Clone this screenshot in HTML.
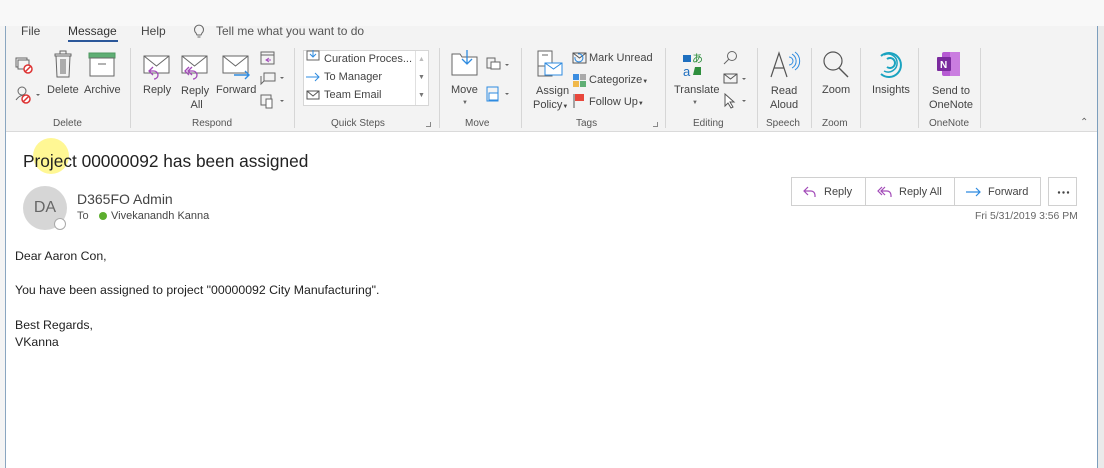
<!DOCTYPE html>
<html><head><meta charset="utf-8"><style>
*{margin:0;padding:0;box-sizing:border-box}
body{width:1104px;height:468px;position:relative;overflow:hidden;background:#fff;font-family:"Segoe UI","Liberation Sans","DejaVu Sans",sans-serif;color:#333}
.a{position:absolute;white-space:nowrap}
.t{font-size:11px;color:#444}
.g{font-size:10px;color:#555}
.sep{position:absolute;top:48px;width:1px;height:80px;background:#d6d6d6}
svg{position:absolute;overflow:visible}
.btn{position:absolute;top:177px;height:29px;border:1px solid #d0d0d0;background:#fff;font-size:11px;color:#444;line-height:27px}
.lb{top:84px}
</style></head><body>
<div class="a" style="left:0;top:0;width:1104px;height:26px;background:#f8f8f8"></div>
<div class="a" style="left:0;top:26px;width:1104px;height:442px;background:#f4f4f4"></div>
<div class="a" style="left:6px;top:26px;width:1091px;height:106px;background:#f3f3f3"></div>
<div class="a" style="left:6px;top:131px;width:1091px;height:1px;background:#dadada"></div>
<div class="a" style="left:6px;top:132px;width:1091px;height:336px;background:#fff"></div>
<div class="a" style="left:5px;top:26px;width:1px;height:442px;background:#8aa6c0"></div>
<div class="a" style="left:1097px;top:26px;width:1px;height:442px;background:#7c9ebd"></div>
<div class="a" style="left:1098px;top:26px;width:6px;height:442px;background:#eaeaea"></div>

<!-- tabs -->
<div class="a" style="left:21px;top:24px;font-size:12px;color:#444">File</div>
<div class="a" style="left:68px;top:24px;font-size:12px;color:#333">Message</div>
<div class="a" style="left:68px;top:40px;width:50px;height:2px;background:#2b579a"></div>
<div class="a" style="left:141px;top:24px;font-size:12px;color:#444">Help</div>
<svg style="left:193px;top:25px" width="12" height="14"><path d="M3 8a4.5 4.5 0 1 1 6 0l-1 2H4z" fill="none" stroke="#666"/><line x1="4.5" y1="12" x2="7.5" y2="12" stroke="#666"/></svg>
<div class="a" style="left:216px;top:24px;font-size:12px;color:#555">Tell me what you want to do</div>

<!-- Delete group -->
<svg style="left:15px;top:57px" width="20" height="18"><rect x="1" y="1" width="11" height="9" fill="none" stroke="#666"/><rect x="3" y="3" width="11" height="9" fill="#f3f3f3" stroke="#666"/><circle cx="13" cy="12" r="4" fill="#fff" stroke="#d33" stroke-width="1.5"/><line x1="10" y1="15" x2="16" y2="9" stroke="#d33" stroke-width="1.5"/></svg>
<svg style="left:15px;top:86px" width="26" height="18"><circle cx="7" cy="5" r="4" fill="none" stroke="#666"/><path d="M1 14 Q7 6 12 12" fill="none" stroke="#666"/><circle cx="11" cy="13" r="4" fill="#fff" stroke="#d33" stroke-width="1.5"/><line x1="8" y1="16" x2="14" y2="10" stroke="#d33" stroke-width="1.5"/><path d="M21 8l2 2 2-2z" fill="#666"/></svg>
<svg style="left:53px;top:51px" width="20" height="28"><rect x="2" y="3" width="16" height="2" fill="none" stroke="#666"/><rect x="7" y="0" width="6" height="3" fill="none" stroke="#666"/><path d="M3 5h14l-1 21H4z" fill="none" stroke="#666"/><line x1="8" y1="8" x2="8" y2="23" stroke="#666"/><line x1="10" y1="8" x2="10" y2="23" stroke="#666"/><line x1="12" y1="8" x2="12" y2="23" stroke="#666"/></svg>
<svg style="left:89px;top:53px" width="27" height="24"><rect x="0" y="0" width="26" height="5" fill="#5fae74" stroke="#4d9a61"/><rect x="1" y="5" width="24" height="18" fill="#fff" stroke="#666"/><line x1="9" y1="11" x2="17" y2="11" stroke="#666"/></svg>
<div class="a t lb" style="left:47px">Delete</div>
<div class="a t lb" style="left:84px">Archive</div>
<div class="a g" style="left:53px;top:118px">Delete</div>
<div class="sep" style="left:130px"></div>

<!-- Respond -->
<svg style="left:143px;top:55px" width="28" height="24"><rect x="1" y="1" width="25" height="17" fill="#fff" stroke="#666"/><path d="M1 1l12.5 10L26 1" fill="none" stroke="#666"/><path d="M10 12l-4 4 4 4M6 16h5a4 4 0 0 1 0 8" fill="none" stroke="#a24ab8" stroke-width="1.3"/></svg>
<svg style="left:181px;top:55px" width="28" height="24"><rect x="1" y="1" width="25" height="17" fill="#fff" stroke="#666"/><path d="M1 1l12.5 10L26 1" fill="none" stroke="#666"/><path d="M8 12l-4 4 4 4M11 12l-4 4 4 4M8 16h4a4 4 0 0 1 0 8" fill="none" stroke="#a24ab8" stroke-width="1.3"/></svg>
<svg style="left:222px;top:55px" width="30" height="24"><rect x="1" y="1" width="25" height="17" fill="#fff" stroke="#666"/><path d="M1 1l12.5 10L26 1" fill="none" stroke="#666"/><path d="M12 20h15M23 16l4 4-4 4" fill="none" stroke="#2e8be0" stroke-width="1.4"/></svg>
<div class="a t lb" style="left:143px">Reply</div>
<div class="a t lb" style="left:181px;text-align:center;line-height:14px">Reply<br>&nbsp;All</div>
<div class="a t lb" style="left:216px">Forward</div>
<svg style="left:260px;top:50px" width="16" height="16"><rect x="1" y="2" width="13" height="12" fill="none" stroke="#666"/><line x1="1" y1="5" x2="14" y2="5" stroke="#666"/><path d="M9 8l-3 2 3 2M6 10h5" fill="none" stroke="#a24ab8"/></svg>
<svg style="left:260px;top:72px" width="26" height="14"><rect x="4" y="1" width="11" height="8" fill="none" stroke="#666"/><path d="M1 4v8l3-3" fill="none" stroke="#666"/><path d="M20 5l2 2 2-2z" fill="#666"/></svg>
<svg style="left:260px;top:93px" width="26" height="16"><rect x="1" y="2" width="10" height="10" fill="none" stroke="#666"/><rect x="6" y="6" width="6" height="9" fill="#fff" stroke="#666"/><path d="M20 7l2 2 2-2z" fill="#666"/></svg>
<div class="a g" style="left:192px;top:118px">Respond</div>
<div class="sep" style="left:294px"></div>

<!-- Quick steps -->
<div class="a" style="left:303px;top:50px;width:126px;height:56px;background:#fff;border:1px solid #d6d6d6"></div>
<div class="a" style="left:415px;top:51px;width:13px;height:54px;border-left:1px solid #e0e0e0"></div>
<div class="a" style="left:418px;top:56px;font-size:7px;color:#bbb">&#9650;</div>
<div class="a" style="left:418px;top:74px;font-size:7px;color:#777">&#9660;</div>
<div class="a" style="left:418px;top:92px;font-size:7px;color:#777">&#9660;</div>
<svg style="left:306px;top:50px" width="14" height="12"><rect x="1" y="1" width="12" height="9" fill="none" stroke="#666"/><path d="M7 0v7M4 4l3 3 3-3" fill="none" stroke="#2e8be0"/></svg>
<div class="a t" style="left:324px;top:53px">Curation Proces...</div>
<svg style="left:306px;top:72px" width="14" height="10"><path d="M0 5h13M9 1l4 4-4 4" fill="none" stroke="#2e8be0"/></svg>
<div class="a t" style="left:324px;top:71px">To Manager</div>
<svg style="left:306px;top:90px" width="14" height="10"><rect x="1" y="1" width="12" height="8" fill="none" stroke="#555"/><path d="M1 1l6 5 6-5" fill="none" stroke="#555"/></svg>
<div class="a t" style="left:324px;top:89px">Team Email</div>
<div class="a g" style="left:331px;top:118px">Quick Steps</div>
<div class="a" style="left:426px;top:122px;width:5px;height:5px;border-right:1px solid #888;border-bottom:1px solid #888"></div>
<div class="sep" style="left:439px"></div>

<!-- Move -->
<svg style="left:451px;top:50px" width="28" height="26"><path d="M1 4h8l2 3h15v18H1z" fill="#fff" stroke="#666"/><path d="M16 0v14M11 9l5 5 5-5" fill="none" stroke="#2e8be0" stroke-width="1.3"/></svg>
<div class="a t lb" style="left:451px">Move</div>
<div class="a" style="left:462px;top:100px;font-size:6px;color:#666">&#9660;</div>
<svg style="left:486px;top:57px" width="26" height="16"><rect x="1" y="1" width="8" height="10" fill="none" stroke="#666"/><rect x="5" y="5" width="9" height="7" fill="#fff" stroke="#666"/><path d="M19 7l2 2 2-2z" fill="#666"/></svg>
<svg style="left:486px;top:86px" width="26" height="18"><rect x="1" y="1" width="11" height="14" fill="none" stroke="#2e8be0"/><rect x="3" y="7" width="9" height="7" fill="#fff" stroke="#2e8be0"/><path d="M19 7l2 2 2-2z" fill="#666"/></svg>
<div class="a g" style="left:465px;top:118px">Move</div>
<div class="sep" style="left:521px"></div>

<!-- Tags -->
<svg style="left:535px;top:50px" width="30" height="30"><rect x="3" y="1" width="14" height="15" fill="#fff" stroke="#666"/><line x1="7" y1="5" x2="13" y2="5" stroke="#666"/><rect x="3" y="16" width="14" height="10" fill="none" stroke="#666"/><rect x="10" y="13" width="17" height="12" fill="#fff" stroke="#2e8be0"/><path d="M10 13l8.5 6 8.5-6" fill="none" stroke="#2e8be0"/></svg>
<div class="a t lb" style="left:533px;line-height:14px">&nbsp;Assign<br>Policy<span style="font-size:6px">&#9660;</span></div>
<svg style="left:572px;top:52px" width="16" height="12"><rect x="1" y="1" width="13" height="10" fill="none" stroke="#555"/><path d="M1 1l6.5 5 6.5-5" fill="none" stroke="#555"/><path d="M3 5a4 4 0 1 0 3-3" fill="none" stroke="#2e8be0"/></svg>
<div class="a t" style="left:589px;top:52px">Mark Unread</div>
<svg style="left:572px;top:73px" width="16" height="16"><rect x="1" y="1" width="6" height="6" fill="#3b8de0"/><rect x="8" y="1" width="6" height="6" fill="#aaa"/><rect x="1" y="8" width="6" height="6" fill="#f0b84a"/><rect x="8" y="8" width="6" height="6" fill="#5fae74"/></svg>
<div class="a t" style="left:589px;top:74px">Categorize<span style="font-size:6px">&#9660;</span></div>
<svg style="left:572px;top:93px" width="14" height="16"><line x1="2" y1="1" x2="2" y2="15" stroke="#555"/><rect x="3" y="1" width="9" height="7" fill="#e8473c"/></svg>
<div class="a t" style="left:589px;top:96px">Follow Up<span style="font-size:6px">&#9660;</span></div>
<div class="a g" style="left:576px;top:118px">Tags</div>
<div class="a" style="left:653px;top:122px;width:5px;height:5px;border-right:1px solid #888;border-bottom:1px solid #888"></div>
<div class="sep" style="left:665px"></div>

<!-- Editing -->
<svg style="left:681px;top:51px" width="26" height="28"><path d="M2 4h8v7H2z" fill="#1e6fbf"/><text x="2" y="25" font-size="13" fill="#1e6fbf" font-family="Liberation Sans">a</text><text x="11" y="11" font-size="11" fill="#2f8f3e" font-family="Noto Sans CJK JP">あ</text><path d="M14 16l6 0 0 8-8 0z" fill="#2f8f3e"/></svg>
<div class="a t lb" style="left:674px">Translate</div>
<div class="a" style="left:692px;top:100px;font-size:6px;color:#666">&#9660;</div>
<svg style="left:723px;top:50px" width="16" height="16"><circle cx="9" cy="6" r="4.5" fill="none" stroke="#666"/><line x1="6" y1="9" x2="1" y2="14" stroke="#666"/></svg>
<svg style="left:723px;top:73px" width="26" height="14"><rect x="1" y="1" width="13" height="9" fill="none" stroke="#555"/><path d="M1 1l6.5 5 6.5-5" fill="none" stroke="#555"/><path d="M19 5l2 2 2-2z" fill="#666"/></svg>
<svg style="left:723px;top:93px" width="26" height="16"><path d="M2 1v12l3-3 3 5 2-1-3-5h4z" fill="#fff" stroke="#555"/><path d="M19 7l2 2 2-2z" fill="#666"/></svg>
<div class="a g" style="left:693px;top:118px">Editing</div>
<div class="sep" style="left:757px"></div>

<!-- Speech -->
<svg style="left:770px;top:51px" width="30" height="28"><path d="M1 26L9 2 17 26M4 17h10" fill="none" stroke="#555" stroke-width="1.2"/><path d="M19 6a4 4 0 0 1 0 8M22 3a8 8 0 0 1 0 14M25 1a11 11 0 0 1 0 18" fill="none" stroke="#2e8be0"/></svg>
<div class="a t lb" style="left:770px;line-height:14px;text-align:center">Read<br>Aloud</div>
<div class="a g" style="left:766px;top:118px">Speech</div>
<div class="sep" style="left:811px"></div>

<!-- Zoom -->
<svg style="left:822px;top:51px" width="28" height="28"><circle cx="11" cy="10" r="9" fill="none" stroke="#555" stroke-width="1.2"/><line x1="17" y1="17" x2="26" y2="26" stroke="#555" stroke-width="1.4"/></svg>
<div class="a t lb" style="left:822px">Zoom</div>
<div class="a g" style="left:822px;top:118px">Zoom</div>
<div class="sep" style="left:860px"></div>

<!-- Insights -->
<svg style="left:875px;top:50px" width="30" height="30"><path d="M6 24A12 12 0 1 0 6 6" fill="none" stroke="#1aa3c0" stroke-width="2"/><path d="M12 17A5 5 0 1 0 12 9" fill="none" stroke="#1aa3c0" stroke-width="2"/><path d="M9 21A9 9 0 1 0 9 5" fill="none" stroke="#1aa3c0" stroke-width="1.5"/></svg>
<div class="a t lb" style="left:872px">Insights</div>
<div class="sep" style="left:918px"></div>

<!-- OneNote -->
<svg style="left:936px;top:52px" width="26" height="26"><rect x="6" y="0" width="18" height="24" rx="2" fill="#b65ad3"/><rect x="14" y="0" width="10" height="24" fill="#ca7de0"/><rect x="1" y="5" width="14" height="14" rx="1" fill="#7b2b9e"/><text x="4" y="16" font-size="10" font-weight="bold" fill="#fff" font-family="Liberation Sans">N</text></svg>
<div class="a t lb" style="left:929px;line-height:14px;text-align:center">Send to<br>OneNote</div>
<div class="a g" style="left:929px;top:118px">OneNote</div>
<div class="sep" style="left:980px"></div>
<div class="a" style="left:1080px;top:117px;font-size:10px;color:#666">&#8963;</div>

<!-- Mail body -->
<div class="a" style="left:33px;top:138px;width:36px;height:36px;border-radius:50%;background:rgba(255,240,60,0.55)"></div>
<div class="a" style="left:23px;top:151px;font-size:17.3px;color:#222">Project 00000092 has been assigned</div>
<div class="a" style="left:23px;top:186px;width:44px;height:44px;border-radius:50%;background:#d6d6d6;color:#666;font-size:16px;text-align:center;line-height:44px">DA</div>
<div class="a" style="left:54px;top:218px;width:12px;height:12px;border-radius:50%;background:#fff;border:1px solid #aaa"></div>
<div class="a" style="left:77px;top:191px;font-size:14px;color:#444">D365FO Admin</div>
<div class="a" style="left:77px;top:210px;font-size:11px;color:#555">To</div>
<div class="a" style="left:99px;top:212px;width:8px;height:8px;border-radius:50%;background:#5cae2e"></div>
<div class="a" style="left:111px;top:210px;font-size:11px;color:#444">Vivekanandh Kanna</div>

<div class="btn" style="left:791px;width:75px"><svg style="left:11px;top:8px" width="14" height="12"><path d="M5 1L1 5l4 4M1 5h7a4 4 0 0 1 4 4v2" fill="none" stroke="#a24ab8" stroke-width="1.2"/></svg><span style="position:absolute;left:32px;top:1px">Reply</span></div>
<div class="btn" style="left:865px;width:90px"><svg style="left:11px;top:8px" width="16" height="12"><path d="M5 1L1 5l4 4M8 1L4 5l4 4M4 5h6a4 4 0 0 1 4 4v2" fill="none" stroke="#a24ab8" stroke-width="1.2"/></svg><span style="position:absolute;left:33px;top:1px">Reply All</span></div>
<div class="btn" style="left:954px;width:87px"><svg style="left:11px;top:9px" width="16" height="10"><path d="M0 5h14M10 1l4 4-4 4" fill="none" stroke="#2e8be0" stroke-width="1.2"/></svg><span style="position:absolute;left:33px;top:1px">Forward</span></div>
<div class="btn" style="left:1048px;width:29px"><svg style="left:8px;top:13px" width="14" height="3"><circle cx="2" cy="1.5" r="1.2" fill="#444"/><circle cx="6.5" cy="1.5" r="1.2" fill="#444"/><circle cx="11" cy="1.5" r="1.2" fill="#444"/></svg></div>
<div class="a" style="left:975px;top:211px;font-size:10.4px;color:#666">Fri 5/31/2019 3:56 PM</div>

<div class="a" style="left:15px;top:249px;font-size:12.3px;color:#222">Dear Aaron Con,</div>
<div class="a" style="left:15px;top:283px;font-size:12.3px;color:#222">You have been assigned to project "00000092 City Manufacturing".</div>
<div class="a" style="left:15px;top:318px;font-size:12.3px;color:#222">Best Regards,</div>
<div class="a" style="left:15px;top:335px;font-size:12.3px;color:#222">VKanna</div>
</body></html>
